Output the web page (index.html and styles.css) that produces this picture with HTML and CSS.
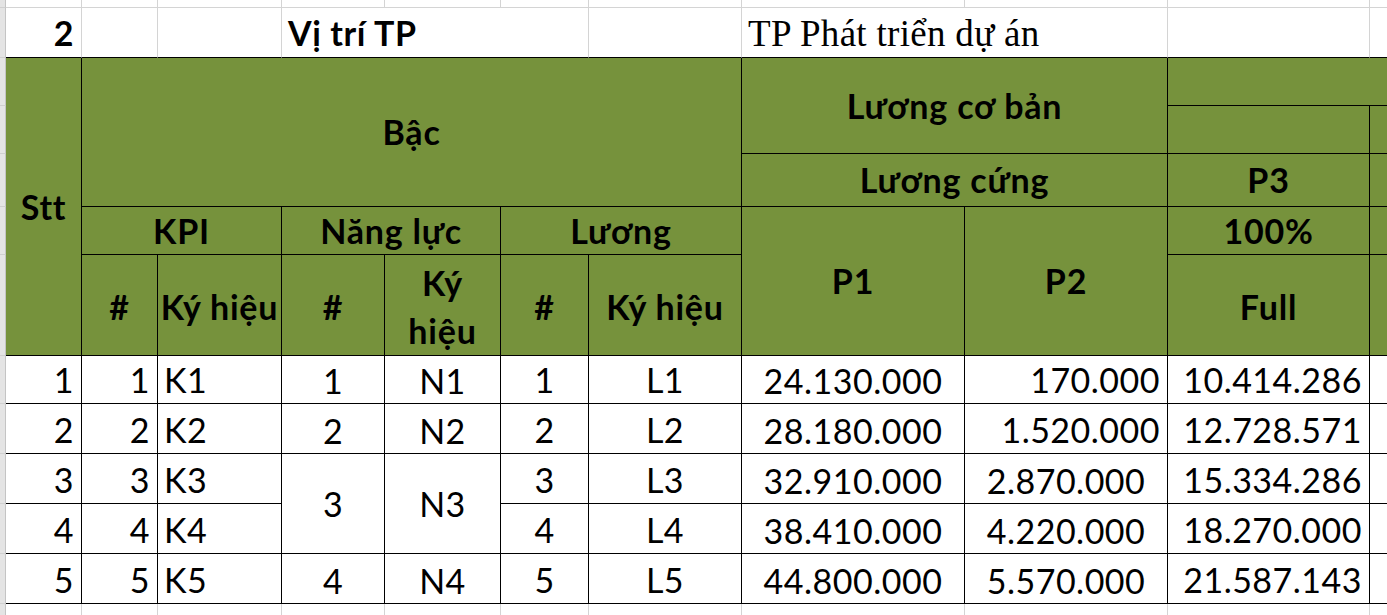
FILE: index.html
```html
<!DOCTYPE html>
<html lang="vi">
<head>
<meta charset="utf-8">
<title>Bảng lương TP Phát triển dự án</title>
<link rel="stylesheet" href="styles.css">
</head>
<body>
<div class="sheet">
  <!-- r0 -->
  <div class="gut"></div>
  <div class="c"></div><div class="c"></div><div class="c"></div><div class="c"></div><div class="c"></div><div class="c"></div><div class="c"></div><div class="c"></div><div class="c"></div><div class="c"></div><div class="c end"></div>
  <!-- r1 -->
  <div class="gut"></div>
  <div class="c bb b r">2</div>
  <div class="c bb"></div>
  <div class="c bb"></div>
  <div class="c bb b l cs3">Vị trí TP</div>
  <div class="c bb"></div>
  <div class="c bb serif l cs2">TP Phát triển dự án</div>
  <div class="c bb"></div>
  <div class="c bb end"></div>
  <!-- r2 -->
  <div class="gut"></div>
  <div class="h rs5">Stt</div>
  <div class="h cs6 rs3">Bậc</div>
  <div class="h cs2 rs2">Lương cơ bản</div>
  <div class="h cs2 end"></div>
  <!-- r3 -->
  <div class="gut"></div>
  <div class="h"></div>
  <div class="h end"></div>
  <!-- r4 -->
  <div class="gut"></div>
  <div class="h cs2">Lương cứng</div>
  <div class="h">P3</div>
  <div class="h end"></div>
  <!-- r5 -->
  <div class="gut"></div>
  <div class="h cs2">KPI</div>
  <div class="h cs2">Năng lực</div>
  <div class="h cs2">Lương</div>
  <div class="h rs2">P1</div>
  <div class="h rs2">P2</div>
  <div class="h">100%</div>
  <div class="h end"></div>
  <!-- r6 -->
  <div class="gut"></div>
  <div class="h hl">#</div>
  <div class="h hl">Ký hiệu</div>
  <div class="h hl">#</div>
  <div class="h hl wrap">Ký<br>hiệu</div>
  <div class="h hl">#</div>
  <div class="h hl">Ký hiệu</div>
  <div class="h hl">Full</div>
  <div class="h end"></div>
  <!-- r7 -->
  <div class="gut"></div>
  <div class="d r">1</div>
  <div class="d r">1</div>
  <div class="d l">K1</div>
  <div class="d m low">1</div>
  <div class="d m low">N1</div>
  <div class="d m">1</div>
  <div class="d m">L1</div>
  <div class="d m low">24.130.000</div>
  <div class="d r">170.000</div>
  <div class="d r">10.414.286</div>
  <div class="d end"></div>
  <!-- r8 -->
  <div class="gut"></div>
  <div class="d r">2</div>
  <div class="d r">2</div>
  <div class="d l">K2</div>
  <div class="d m low">2</div>
  <div class="d m low">N2</div>
  <div class="d m">2</div>
  <div class="d m">L2</div>
  <div class="d m low">28.180.000</div>
  <div class="d r">1.520.000</div>
  <div class="d r">12.728.571</div>
  <div class="d end"></div>
  <!-- r9 -->
  <div class="gut"></div>
  <div class="d r">3</div>
  <div class="d r">3</div>
  <div class="d l">K3</div>
  <div class="d m rs2 mid">3</div>
  <div class="d m rs2 mid">N3</div>
  <div class="d m">3</div>
  <div class="d m">L3</div>
  <div class="d m low">32.910.000</div>
  <div class="d m low">2.870.000</div>
  <div class="d r">15.334.286</div>
  <div class="d end"></div>
  <!-- r10 -->
  <div class="gut"></div>
  <div class="d r">4</div>
  <div class="d r">4</div>
  <div class="d l">K4</div>
  <div class="d m">4</div>
  <div class="d m">L4</div>
  <div class="d m low">38.410.000</div>
  <div class="d m low">4.220.000</div>
  <div class="d r">18.270.000</div>
  <div class="d end"></div>
  <!-- r11 -->
  <div class="gut"></div>
  <div class="d r">5</div>
  <div class="d r">5</div>
  <div class="d l">K5</div>
  <div class="d m low">4</div>
  <div class="d m low">N4</div>
  <div class="d m">5</div>
  <div class="d m">L5</div>
  <div class="d m low">44.800.000</div>
  <div class="d m low">5.570.000</div>
  <div class="d r">21.587.143</div>
  <div class="d end"></div>
  <!-- r12 -->
  <div class="gut"></div>
  <div class="c"></div><div class="c"></div><div class="c"></div><div class="c"></div><div class="c"></div><div class="c"></div><div class="c"></div><div class="c"></div><div class="c"></div><div class="c"></div><div class="c end"></div>
</div>
</body>
</html>
```
FILE: styles.css
```css
html, body {
  margin: 0;
  padding: 0;
  background: #ffffff;
  overflow: hidden;
}

.sheet {
  display: grid;
  grid-template-columns: 6px 76px 76px 124px 103px 116px 88px 153px 223px 203px 202px minmax(0, 1fr);
  grid-template-rows: 8px 50px 48px 48px 53px 48px 101px 48px 50px 50px 50px 50px 12px;
  width: 100%;
  font-family: "Lato", "Open Sans", sans-serif;
  font-size: 34px;
  letter-spacing: 0.5px;
  color: #000;
}

.sheet > div {
  box-sizing: border-box;
  display: flex;
  align-items: center;
  justify-content: center;
  white-space: nowrap;
  line-height: 1;
  min-width: 0;
}

.gut {
  background: #e4e4e4;
  border-right: 1px solid #c4c4c4;
  border-bottom: 1px solid #cfcfcf;
}

.c {
  background: #fff;
  border-right: 1px solid #d4d4d4;
  border-bottom: 1px solid #d4d4d4;
}

.c.bb {
  border-bottom-color: #000;
}

.h {
  background: #76923c;
  border-right: 1px solid #000;
  border-bottom: 1px solid #000;
  font-weight: 700;
  letter-spacing: 0.8px;
}

.h.hl {
  padding-top: 4px;
}

.h.wrap {
  white-space: normal;
  line-height: 48px;
  text-align: center;
  padding-top: 3px;
}

.d {
  background: #fff;
  border-right: 1px solid #000;
  border-bottom: 1px solid #000;
  align-items: flex-end !important;
  padding-bottom: 6px;
}

.d.low {
  padding-bottom: 5px;
}

.d.mid {
  align-items: center !important;
  padding-bottom: 0;
}

.sheet > .end {
  border-right: none;
}

.b { font-weight: 700; letter-spacing: 0.6px; }
.r { justify-content: flex-end !important; padding-right: 7px; }
.l { justify-content: flex-start !important; padding-left: 6px; }
.m { justify-content: center; }

.serif {
  font-family: "Liberation Serif", "Times New Roman", serif;
  font-size: 37px;
  letter-spacing: 0.3px;
  font-weight: 400;
  padding-top: 2px;
}

.cs2 { grid-column: span 2; }
.cs3 { grid-column: span 3; }
.cs6 { grid-column: span 6; }
.rs2 { grid-row: span 2; }
.rs3 { grid-row: span 3; }
.rs5 { grid-row: span 5; }
```
